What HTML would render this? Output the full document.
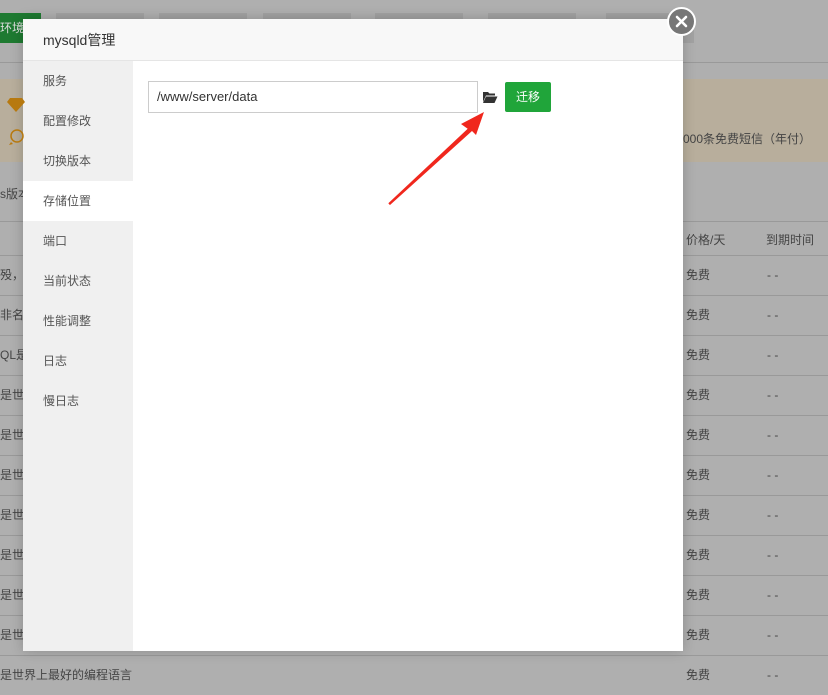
<!DOCTYPE html>
<html><head><meta charset="utf-8"><style>
*{margin:0;padding:0;box-sizing:border-box}
body{width:828px;height:693px;overflow:hidden;background:#afafaf;font-family:"Liberation Sans","Noto Sans CJK SC",sans-serif;font-size:12px;color:#444;position:relative}
.abs{position:absolute}
.tab{position:absolute;top:13px;height:30px;background:#a2a2a2}
.row{position:absolute;left:0;width:828px;height:40px;border-top:1px solid #999;line-height:39px}
.row span{position:absolute}
.menu div{height:40px;line-height:40px;padding-left:20px;color:#555;font-size:12px}
</style></head><body>
<div class="abs" style="left:0;top:13px;width:41px;height:30px;background:#1e7a31;color:#ddd;line-height:30px;font-size:12px">环境</div>
<div class="tab" style="left:56px;width:88px"></div>
<div class="tab" style="left:159px;width:88px"></div>
<div class="tab" style="left:263px;width:88px"></div>
<div class="tab" style="left:375px;width:88px"></div>
<div class="tab" style="left:488px;width:88px"></div>
<div class="tab" style="left:606px;width:88px"></div>
<div class="abs" style="left:0;top:62px;width:828px;height:1px;background:#999"></div>
<div class="abs" style="left:0;top:79px;width:828px;height:83px;background:#b8ae9c"></div>
<div class="abs" style="left:683px;top:130px;color:#444;font-size:12px">000条免费短信（年付）</div>
<div class="abs" style="left:0;top:185px;color:#444">s版本</div>
<div class="abs" style="left:0;top:221px;width:828px;height:1px;background:#999"></div>
<div class="abs" style="left:686px;top:231px;color:#444">价格/天</div>
<div class="abs" style="left:766px;top:231px;color:#444">到期时间</div>
<div class="row" style="top:255px"><span style="left:0">殁，占</span><span style="left:686px">免费</span><span style="left:767px">- -</span></div>
<div class="row" style="top:295px"><span style="left:0">非名第</span><span style="left:686px">免费</span><span style="left:767px">- -</span></div>
<div class="row" style="top:335px"><span style="left:0">QL是</span><span style="left:686px">免费</span><span style="left:767px">- -</span></div>
<div class="row" style="top:375px"><span style="left:0">是世界</span><span style="left:686px">免费</span><span style="left:767px">- -</span></div>
<div class="row" style="top:415px"><span style="left:0">是世界</span><span style="left:686px">免费</span><span style="left:767px">- -</span></div>
<div class="row" style="top:455px"><span style="left:0">是世界</span><span style="left:686px">免费</span><span style="left:767px">- -</span></div>
<div class="row" style="top:495px"><span style="left:0">是世界</span><span style="left:686px">免费</span><span style="left:767px">- -</span></div>
<div class="row" style="top:535px"><span style="left:0">是世界</span><span style="left:686px">免费</span><span style="left:767px">- -</span></div>
<div class="row" style="top:575px"><span style="left:0">是世界</span><span style="left:686px">免费</span><span style="left:767px">- -</span></div>
<div class="row" style="top:615px"><span style="left:0">是世界</span><span style="left:686px">免费</span><span style="left:767px">- -</span></div>
<div class="row" style="top:655px"><span style="left:0">是世界上最好的编程语言</span><span style="left:686px">免费</span><span style="left:767px">- -</span></div>

<div class="abs" style="left:23px;top:19px;width:660px;height:632px;background:#fff;box-shadow:0 0 12px rgba(0,0,0,.2)">
 <div style="height:42px;background:#f8f8f8;border-bottom:1px solid #e5e5e5;line-height:42px;padding-left:20px;font-size:14px;color:#333">mysqld管理</div>
 <div class="menu" style="position:absolute;left:0;top:42px;width:110px;height:590px;background:#f0f0f0">
  <div>服务</div><div>配置修改</div><div>切换版本</div><div style="background:#fff">存储位置</div><div>端口</div><div>当前状态</div><div>性能调整</div><div>日志</div><div>慢日志</div>
 </div>
 <div style="position:absolute;left:125px;top:62px;width:330px;height:32px;border:1px solid #ccc;line-height:30px;padding-left:8px;font-size:13px;color:#333">/www/server/data</div>
 <svg style="position:absolute;left:459px;top:72px" width="16" height="13" viewBox="0 0 16 13"><path d="M1 1h5l1.5 1.5H13v2H4L1 11z" fill="#333"/><path d="M4 5.5h11.5L12.5 12H1z" fill="#333"/></svg>
 <div style="position:absolute;left:482px;top:63px;width:46px;height:30px;background:#20a53a;border-radius:2px;color:#fff;text-align:center;line-height:30px;font-size:12px">迁移</div>
</div>
<svg class="abs" style="left:0;top:0" width="828" height="693"><polygon points="389,204 468,129 461,124 484,112 476,135 472,131 390,205" fill="#f0271d"/><line x1="389" y1="204" x2="470" y2="128" stroke="#f0271d" stroke-width="2"/></svg>
<div class="abs" style="left:667px;top:7px;width:29px;height:29px;border-radius:50%;background:#777;border:2px solid #fff"></div>
<svg class="abs" style="left:674px;top:14px" width="15" height="15"><path d="M3 3L12 12M12 3L3 12" stroke="#fff" stroke-width="2.6" stroke-linecap="round"/></svg>
<svg class="abs" style="left:6px;top:97px" width="20" height="16"><path d="M4 1h12l3 4-9 10L1 5z" fill="#b7790f"/></svg>
<svg class="abs" style="left:7px;top:128px" width="18" height="18"><circle cx="10" cy="8" r="6" fill="none" stroke="#b7790f" stroke-width="1.5"/><path d="M4 14l-2 3 4-1z" fill="#b7790f"/></svg>
</body></html>
